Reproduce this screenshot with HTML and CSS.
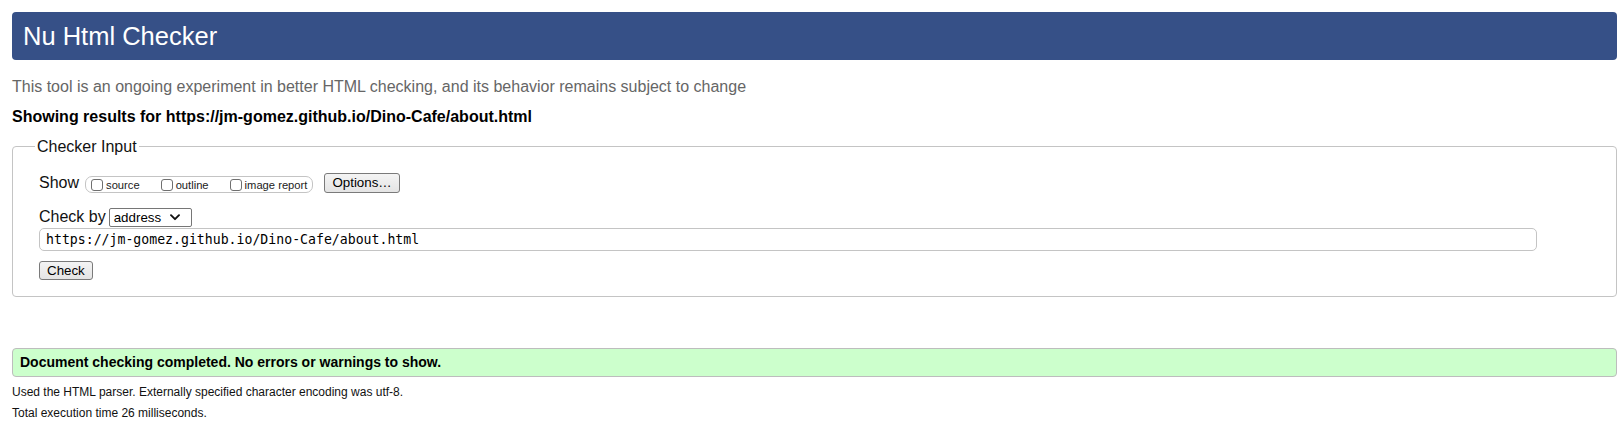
FILE: index.html
```html
<!DOCTYPE html>
<html lang="en">
<head>
<meta charset="utf-8">
<title>Nu Html Checker</title>
<link rel="stylesheet" href="styles.css">
</head>
<body>
<h1 class="title">Nu Html Checker</h1>
<p class="intro">This tool is an ongoing experiment in better HTML checking, and its behavior remains subject to change</p>
<p class="results-for">Showing results for https://jm-gomez.github.io/Dino-Cafe/about.html</p>
<form class="checker">
  <fieldset class="checker-input">
    <legend class="legend">Checker Input</legend>
    <div class="row show-row">
      <span class="row-label">Show</span>
      <span class="show-group">
        <label class="opt"><input type="checkbox" class="cb"><span class="opt-text">source</span></label>
        <label class="opt"><input type="checkbox" class="cb"><span class="opt-text">outline</span></label>
        <label class="opt"><input type="checkbox" class="cb"><span class="opt-text">image report</span></label>
      </span>
      <button type="button" class="btn btn-options">Options…</button>
    </div>
    <div class="row checkby-row">
      <span class="row-label">Check by</span>
      <span class="select">
        <span class="select-value">address</span>
        <svg class="chevron" width="10" height="7" viewBox="0 0 10 7"><path d="M1 1.2 L5 5.2 L9 1.2" fill="none" stroke="#111" stroke-width="1.9" stroke-linecap="round" stroke-linejoin="round"/></svg>
      </span>
    </div>
    <input class="url" type="text" value="https://jm-gomez.github.io/Dino-Cafe/about.html">
    <div class="row submit-row">
      <button type="button" class="btn btn-check">Check</button>
    </div>
  </fieldset>
</form>
<p class="success">Document checking completed. No errors or warnings to show.</p>
<p class="note">Used the HTML parser. Externally specified character encoding was utf-8.</p>
<p class="note note-last">Total execution time 26 milliseconds.</p>
</body>
</html>
```
FILE: styles.css
```css
html, body {
  background: #fff;
}
body {
  margin: 0;
  padding: 12px 7px 0 12px;
  font-family: "Liberation Sans", Arial, sans-serif;
  color: #000;
}
.title {
  margin: 0;
  height: 48px;
  line-height: 48px;
  padding-left: 11px;
  background: #365087;
  color: #fff;
  font-size: 25.5px;
  font-weight: normal;
  border-radius: 4px;
}
.intro {
  margin: 18px 0 0;
  font-size: 16px;
  line-height: 18px;
  color: #666;
}
.results-for {
  margin: 12px 0 0;
  font-size: 16px;
  line-height: 18px;
  font-weight: bold;
}
.checker {
  margin: 0;
}
.checker-input {
  margin: 11px 0 0;
  padding: 17px 79px 16px 26px;
  border: 1px solid #c4c4c4;
  border-radius: 4px;
  min-width: 0;
}
.legend {
  padding: 0 2px;
  margin-left: -4px;
  font-size: 16px;
  line-height: 19px;
  color: #111;
}
.row {
  display: flex;
  align-items: center;
  height: 20px;
}
.row-label {
  font-size: 16px;
  line-height: 20px;
  color: #111;
}
.show-group {
  display: flex;
  align-items: center;
  height: 15px;
  margin-left: 6px;
  margin-top: 3px;
  padding: 0 5px 0 5px;
  border: 1px solid #c4c4c4;
  border-radius: 7px;
}
.opt {
  display: flex;
  align-items: center;
  margin-right: 21px;
}
.opt:last-child {
  margin-right: 0;
}
.cb {
  appearance: none;
  -webkit-appearance: none;
  margin: 0;
  width: 12px;
  height: 12px;
  border: 1px solid #6f6f6f;
  border-radius: 3px;
  background: #fff;
}
.opt-text {
  margin-left: 3px;
  font-size: 11.2px;
  color: #222;
}
.btn {
  font-family: "Liberation Sans", Arial, sans-serif;
  font-size: 13.33px;
  height: 20px;
  padding: 0 6px;
  margin: 0;
  border: 1px solid #7a7a7a;
  border-radius: 3px;
  background: linear-gradient(#f4f4f4, #e4e4e4);
  color: #000;
  line-height: 18px;
}
.btn-options {
  margin-left: 11px;
  padding: 0 7px;
}
.checkby-row {
  margin-top: 14px;
}
.select {
  display: flex;
  align-items: center;
  justify-content: space-between;
  box-sizing: border-box;
  width: 83px;
  height: 19px;
  margin-left: 3px;
  padding: 0 11px 0 4px;
  border: 1px solid #767676;
  border-radius: 2px;
  background: #fff;
}
.select-value {
  font-size: 13.33px;
  color: #000;
}
.chevron {
  display: block;
}
.url {
  display: block;
  box-sizing: border-box;
  width: 100%;
  height: 23px;
  margin: 1px 0 0;
  padding: 0 6px;
  border: 1px solid #c4c4c4;
  border-radius: 5px;
  font-family: "DejaVu Sans Mono", "Liberation Mono", monospace;
  font-size: 13.2px;
  color: #000;
  background: #fff;
  outline: none;
}
.submit-row {
  margin-top: 10px;
  height: 19px;
}
.btn-check {
  height: 19px;
  line-height: 17px;
  padding: 0 7px;
}
.success {
  margin: 51px 0 0;
  height: 29px;
  box-sizing: border-box;
  padding-left: 7px;
  border: 1px solid #bdbdbd;
  border-radius: 4px;
  background: #ccffcc;
  font-size: 14px;
  font-weight: bold;
  line-height: 27px;
}
.note {
  margin: 8px 0 0;
  font-size: 12px;
  line-height: 14px;
  color: #111;
}
.note + .note {
  margin-top: 7px;
}
```
